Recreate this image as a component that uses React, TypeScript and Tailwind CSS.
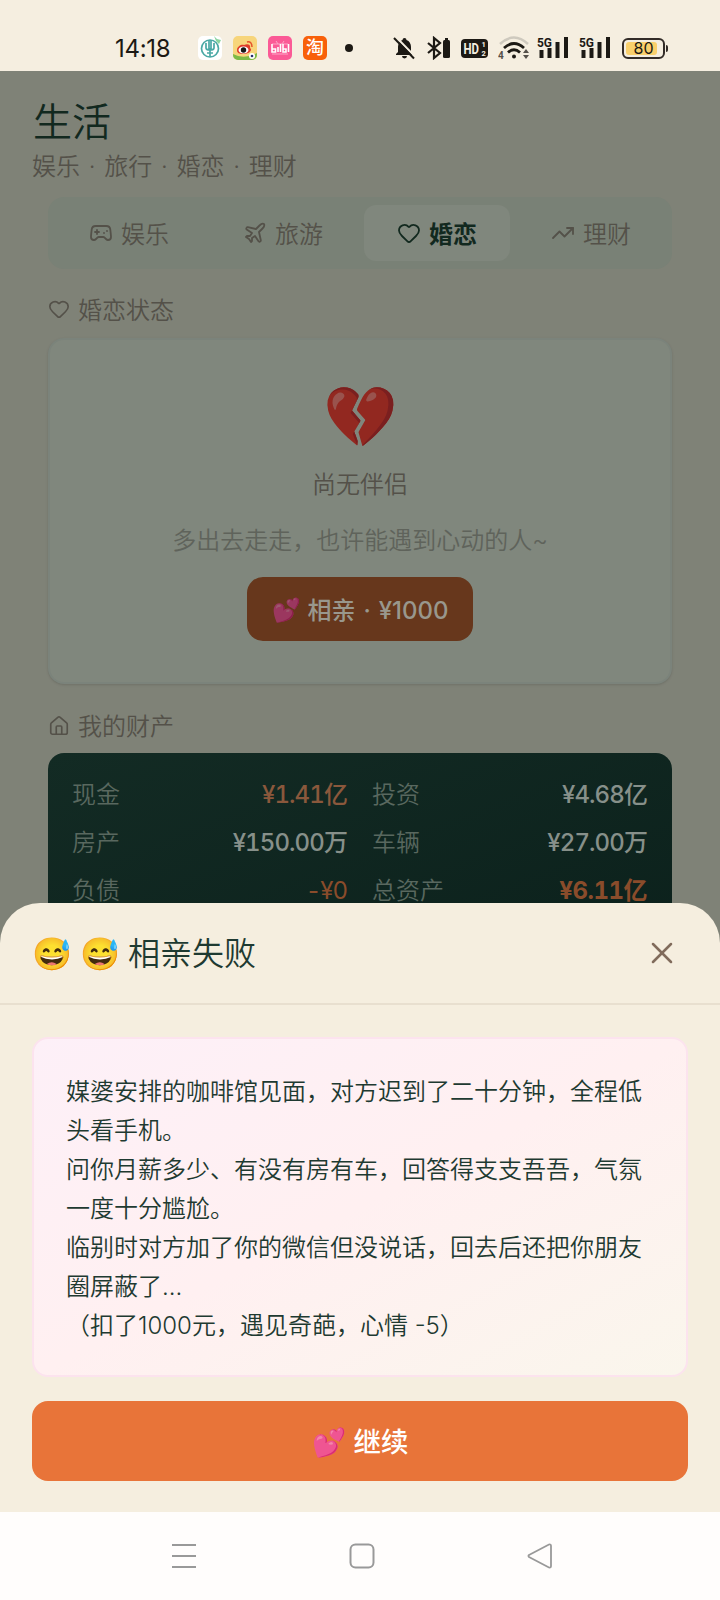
import { Gamepad2, Heart, House, Plane, TrendingUp, X } from "lucide-react";

const tabs = [
  { label: "娱乐", icon: Gamepad2, active: false },
  { label: "旅游", icon: Plane, active: false },
  { label: "婚恋", icon: Heart, active: true },
  { label: "理财", icon: TrendingUp, active: false },
];

const assets = [
  { label: "现金", value: "¥1.41亿", style: "tracking-[-0.9px] font-medium text-[#8a583c]" },
  { label: "投资", value: "¥4.68亿", style: "tracking-[-0.9px] font-medium text-[#87908a]" },
  { label: "房产", value: "¥150.00万", style: "tracking-[-0.9px] font-medium text-[#87908a]" },
  { label: "车辆", value: "¥27.00万", style: "tracking-[-0.9px] font-medium text-[#87908a]" },
  { label: "负债", value: "-¥0", style: "tracking-[-1px] font-normal text-[#8a4c2b]" },
  { label: "总资产", value: "¥6.11亿", style: "tracking-[-0.5px] font-bold text-[#8a4c2b]" },
];

const story = [
  "媒婆安排的咖啡馆见面，对方迟到了二十分钟，全程低头看手机。",
  "问你月薪多少、有没有房有车，回答得支支吾吾，气氛一度十分尴尬。",
  "临别时对方加了你的微信但没说话，回去后还把你朋友圈屏蔽了...",
  "（扣了1000元，遇见奇葩，心情 -5）",
];

const Signal = () => (
  <svg width="32" height="24" viewBox="0 0 32 24" fill="#1c1914">
    <text x="0" y="10.500" fontSize="13" fontWeight="700" fontFamily="Roboto" textLength="15" lengthAdjust="spacingAndGlyphs">5G</text>
    <rect x="2.500" y="14" width="4" height="8" />
    <rect x="10.500" y="12" width="4" height="10" />
    <rect x="18.500" y="6" width="4" height="16" />
    <rect x="27" y="1" width="4" height="21" />
  </svg>
);

const StatusBar = () => (
  <div className="flex h-[71px] items-center bg-[#f5eee0] pl-[115px] text-[#1c1914]">
    <span className="mt-[26px] w-[83px] text-[24px] leading-none font-normal tracking-[-0.3px]">14:18</span>
    <div className="mt-[25px] flex items-center gap-[11px]">
      <svg width="24" height="24" viewBox="0 0 24 24">
        <rect width="24" height="24" rx="5" fill="#fff" />
        <g fill="none" stroke="#4ba9a5" strokeWidth="1.7">
          <circle cx="12" cy="12.500" r="8.500" />
          <path d="M11 4v9M13 4v9M12 12v9M8 7v5q0 2 4 2t4-2V7M9 17h6" />
        </g>
        <path d="M16 0l3 3 4 1-2 4-3-3z" fill="#8bd5a0" />
      </svg>
      <svg width="24" height="24" viewBox="0 0 24 24">
        <rect width="24" height="24" rx="5" fill="#f7d57b" />
        <path d="M0 18q11 6 24-1v2a5 5 0 0 1-5 5H5a5 5 0 0 1-5-5z" fill="#7dba46" />
        <path d="M4 14c0-4 5-6 7-5 4-2 7 0 6 3 3 2-1 6-6 6s-7-1-7-4z" fill="#df3b29" />
        <ellipse cx="10.500" cy="14" rx="5" ry="3.500" fill="#fff" />
        <circle cx="10.500" cy="14" r="2.700" fill="#161616" />
        <path d="M14 6q5-1 5 5" stroke="#e5532c" strokeWidth="1.500" fill="none" />
        <circle cx="19" cy="20" r="3" fill="#fff" />
        <circle cx="19" cy="20" r="1.300" fill="#29306b" />
      </svg>
      <svg width="24" height="24" viewBox="0 0 24 24">
        <rect width="24" height="24" rx="5" fill="#fb5a96" />
        <path d="M8 5l2 3M16 5l-2 3M4 8h16M4 18h16" stroke="#fda5c6" strokeWidth="1" />
        <g stroke="#fff" strokeWidth="1.600" fill="none">
          <path d="M4 8v8h3.500v-3H4M10 11v5M12.500 8v8M15 8v8h3v-3h-3M20.500 8v8" />
        </g>
      </svg>
      <div className="flex size-6 items-center justify-center rounded-[5px] bg-[#f8600a] text-[18px] leading-none font-medium text-white">淘</div>
    </div>
    <div className="mt-[25px] ml-[18px] size-2 rounded-full bg-[#1c1914]" />
    <div className="mt-[25px] ml-[40px] flex items-center">
      <svg width="23" height="24" viewBox="0 0 23 24" fill="#1c1914">
        <path d="M11.500 2a2 2 0 0 1 2 2c3 1 4.500 4 4.500 7v5l2 2v1H3v-1l2-2v-5c0-3 1.500-6 4.500-7a2 2 0 0 1 2-2zM9 20h5a2.500 2.500 0 0 1-5 0z" />
        <path d="M3 1L23 21.500" stroke="#f5eee0" strokeWidth="2" />
        <path d="M1 2L21 22.500" stroke="#1c1914" strokeWidth="2" />
      </svg>
      <svg className="ml-[11px]" width="24" height="24" viewBox="0 0 24 24">
        <path d="M1 7l12 10-6 5V2l6 5L1 17" fill="none" stroke="#1c1914" strokeWidth="2.200" />
        <rect x="16" y="4" width="7" height="18" rx="1.500" fill="#1c1914" />
        <rect x="18" y="2" width="3" height="3" fill="#1c1914" />
      </svg>
      <svg className="ml-[10px]" width="28" height="20" viewBox="0 0 28 20">
        <rect width="27" height="19" y="1" rx="4" fill="#1c1914" />
        <g fill="#f5eee0" fontFamily="Roboto" fontWeight="700">
          <text x="2.500" y="16" fontSize="14" textLength="15.500" lengthAdjust="spacingAndGlyphs">HD</text>
          <text x="20.500" y="9" fontSize="7.500">1</text>
          <text x="20.500" y="18" fontSize="7.500">2</text>
        </g>
      </svg>
      <svg className="ml-[9px]" width="32" height="24" viewBox="0 0 32 24" fill="none">
        <path d="M2 8q14-13 28 0" stroke="#cec9be" strokeWidth="2.500" />
        <path d="M6 12q10-9 20 0" stroke="#1c1914" strokeWidth="2.800" />
        <path d="M10 16.500q6-5.500 12 0" stroke="#1c1914" strokeWidth="2.800" />
        <circle cx="16" cy="20.500" r="2" fill="#1c1914" />
        <path d="M25 17l3-4 3 4zM25 19l3 4 3-4z" fill="#55504a" />
        <text x="0" y="23" fontSize="10" fontWeight="700" fontFamily="Roboto" fill="#55504a">4</text>
      </svg>
      <div className="ml-[7px] flex gap-[10px]">
        <Signal />
        <Signal />
      </div>
      <div className="ml-[11px] flex h-[21px] w-[43px] rounded-[6px] border-2 border-[#332c28] p-[2px]">
        <div className="flex w-[31px] items-center justify-center rounded-[3px] bg-[#fad06c] pl-[4px] text-[16px] leading-none font-normal">80</div>
      </div>
      <div className="ml-px h-[7px] w-[2px] rounded-r bg-[#332c28]" />
    </div>
  </div>
);

const AssetRows = () => (
  <div className="mt-[11px] grid h-[240px] grid-cols-2 content-start gap-x-6 gap-y-3 rounded-t-2xl bg-linear-to-br from-[#132b24] to-[#0b201b] px-6 pt-6">
    {assets.map((a) => (
      <div key={a.label} className="flex h-9 items-center justify-between">
        <span className="text-[#59685f]">{a.label}</span>
        <span className={`mr-px tabular-nums ${a.style}`}>{a.value}</span>
      </div>
    ))}
  </div>
);

const ResultSheet = () => (
  <div className="absolute inset-x-0 top-[903px] h-[609px] rounded-t-[40px] bg-[#f5eedf]">
    <div className="flex h-[102px] items-center justify-between border-b-2 border-[#e8dfcf] px-8 text-[#1e3a31]">
      <h2 className="flex items-center pt-px text-[32px]">
        <span className="w-12 text-[32px]">😅</span>
        <span className="w-12 text-[32px]">😅</span>
        相亲失败
      </h2>
      <X className="mr-[8px] size-9 text-[#806b5b]" strokeWidth={1.7} />
    </div>
    <div className="px-8 pt-8">
      <div className="h-[340px] rounded-2xl border-2 border-[#fce3ee] bg-linear-to-br from-[#fdf0f8] via-[#fff0f1] to-[#faf6ec] px-8 pt-[33px] leading-[39px] text-[#1e3a31]">
        {story.map((line) => (
          <p key={line}>{line}</p>
        ))}
      </div>
      <button className="mt-6 flex h-20 w-full items-center justify-center gap-2 rounded-2xl bg-[#e87439] pt-[3px] text-[27.5px] font-medium text-white">
        <span>💕</span>
        <span>继续</span>
      </button>
    </div>
  </div>
);

const NavBar = () => (
  <div className="absolute inset-x-0 bottom-0 flex h-[88px] items-center justify-center gap-[152px] bg-[#fffdfc] pl-[4px]">
    <svg width="26" height="26" viewBox="0 0 26 26" fill="none" stroke="#999" strokeWidth="2">
      <path d="M1 2h24M1 13h24M1 24h24" />
    </svg>
    <svg width="26" height="26" viewBox="0 0 26 26" fill="none" stroke="#999" strokeWidth="2">
      <rect x="1.500" y="1.500" width="23" height="23" rx="5" />
    </svg>
    <svg width="26" height="26" viewBox="0 0 26 26" fill="none" stroke="#999" strokeWidth="1.800" strokeLinejoin="round">
      <path d="M2 12q-1 1 0 2l20 10.500q2 .5 2-1.500V3q0-2-2-1.500z" />
    </svg>
  </div>
);

const App = () => {
  return (
    <div className="relative h-[1600px] w-[720px] overflow-hidden bg-[#7f8277] text-[24px] font-[350]" style={{ fontFamily: "Inter, 'Noto Sans CJK SC', sans-serif" }}>
      <StatusBar />
      <header className="px-8 pt-[26px] text-[#545149]">
        <h1 className="pl-px text-[39px] leading-[50px] text-[#12291f]">生活</h1>
        <p className="mt-[4px] leading-[32px] [word-spacing:2px]">娱乐 · 旅行 · 婚恋 · 理财</p>
      </header>
      <main className="px-12 pt-[14px] text-[#545149]">
        <div className="grid h-[72px] grid-cols-4 gap-2 rounded-2xl bg-[#798176] p-2">
          {tabs.map(({ label, icon: Icon, active }) => (
            <div key={label} className={active ? "flex items-center justify-center gap-2 rounded-xl bg-[#80877d] font-bold text-[#12291f]" : "flex items-center justify-center gap-2"}>
              <Icon className="size-6" strokeWidth={1.8} />
              <span className="pt-[3px]">{label}</span>
            </div>
          ))}
        </div>
        <div className="mt-6 flex h-8 items-center gap-2">
          <Heart className="size-[22px]" strokeWidth={1.8} />
          <span className="pt-[3px]">婚恋状态</span>
        </div>
        <div className="mt-[13px] flex h-[346px] flex-col items-center rounded-2xl border-2 border-[#7b837b] bg-[#80877d] pt-[34px] shadow-sm">
          <div className="h-[84px] text-[60px] leading-[84px] brightness-[0.6]">💔</div>
          <p className="mt-[9px] leading-[36px]">尚无伴侣</p>
          <p className="mt-5 leading-[36px] text-[#5f635b]">多出去走走，也许能遇到心动的人~</p>
          <button className="mt-[18px] flex h-16 w-[226px] items-center justify-center gap-[7px] rounded-2xl bg-[#67371c] pt-[3px] font-medium text-[#99978d]">
            <span className="text-[23px] brightness-[0.65]">💕</span>
            <span className="[word-spacing:1.5px]">相亲 · ¥1000</span>
          </button>
        </div>
        <div className="mt-[26px] flex h-8 items-center gap-2">
          <House className="size-[22px]" strokeWidth={1.8} />
          <span className="pt-px">我的财产</span>
        </div>
        <AssetRows />
      </main>
      <ResultSheet />
      <NavBar />
    </div>
  );
};

export default App;
